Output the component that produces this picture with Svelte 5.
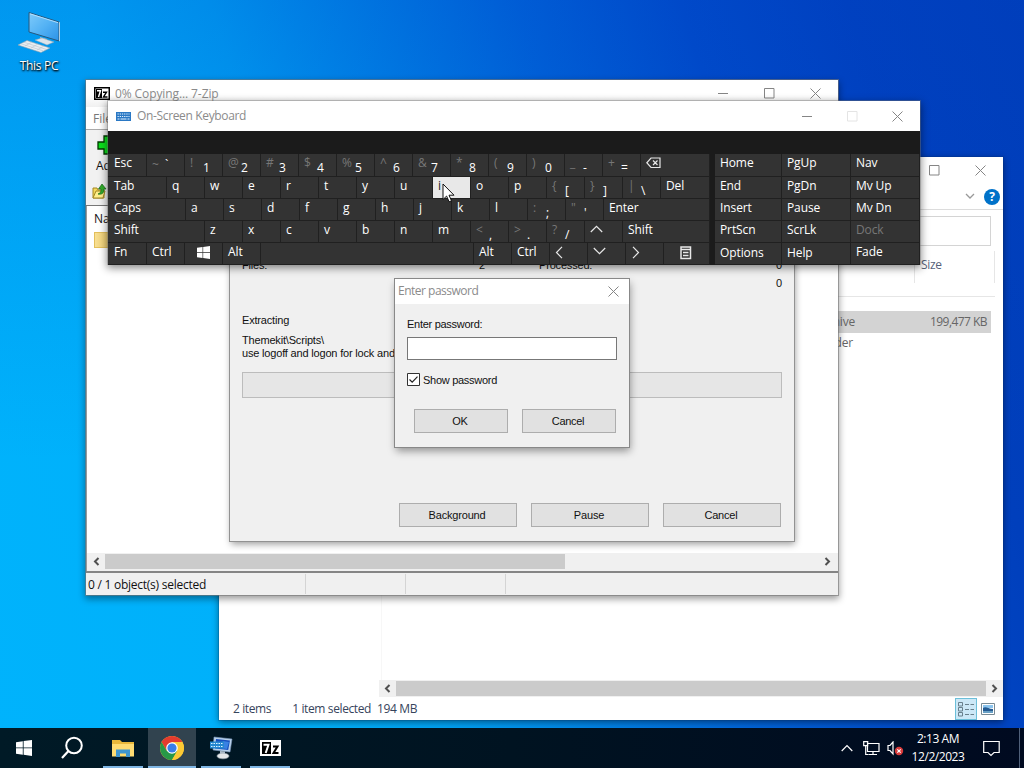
<script>
  const k = (m, w = 38, s = '') => ({ m, w, s });
  const letters = (t) => t.split('').map((c) => k(c));
  const rows = [
    [k('Esc', 38.5), k('`', 38, '~'), k('1', 38, '!'), k('2', 38, '@'), k('3', 38, '#'), k('4', 38, '$'), k('5', 38, '%'), k('6', 38, '^'), k('7', 38, '&'), k('8', 38, '*'), k('9', 38, '('), k('0', 38, ')'), k('-', 38, '_'), k('=', 38, '+'), k('backspace', 69)],
    [k('Tab', 58.5), ...letters('qwertyuiop'), k('[', 38, '{'), k(']', 38, '}'), k('\\', 38, '|'), k('Del', 49)],
    [k('Caps', 77.5), ...letters('asdfghjkl'), k(';', 38, ':'), k("'", 38, '"'), k('Enter', 106)],
    [k('Shift', 96.5), ...letters('zxcvbnm'), k(',', 38, '<'), k('.', 38, '>'), k('/', 38, '?'), k('up'), k('Shift', 87)],
    [k('Fn', 38.5), k('Ctrl'), k('win'), k('Alt'), k('', 213), k('Alt'), k('Ctrl'), k('left'), k('down'), k('right'), k('menu', 46)]
  ];
  const side = ['Home', 'PgUp', 'Nav', 'End', 'PgDn', 'Mv Up', 'Insert', 'Pause', 'Mv Dn', 'PrtScn', 'ScrLk', 'Dock', 'Options', 'Help', 'Fade'];
  const icons = ['backspace', 'up', 'left', 'down', 'right', 'menu', 'win'];
</script>

{#snippet min()}<svg width="11" height="11" viewBox="0 0 11 11"><path d="M0 5.500h10" /></svg>{/snippet}
{#snippet max()}<svg width="11" height="11" viewBox="0 0 11 11"><path d="M.5.5h9.500v9.500H.5z" /></svg>{/snippet}
{#snippet close()}<svg width="11" height="11" viewBox="0 0 11 11"><path d="m.5.5 10 10m0-10-10 10" /></svg>{/snippet}
{#snippet chev(d)}<svg class="chev" width="9" height="9" viewBox="0 0 9 9"><path d={d < 0 ? 'M6.500 1 3 4.500 6.500 8' : 'M2.500 1 6 4.500 2.500 8'} /></svg>{/snippet}
{#snippet flag(size)}
  <svg width={size} height={size} viewBox="0 0 16 16"><path fill="#fff" stroke="none" d="M0 2.200 6.800 1.200v6.300H0zM7.600 1.100 16 0v7.500H7.600zM0 8.300h6.800v6.400L0 13.700zM7.600 8.300H16V16l-8.400-1.200z" /></svg>
{/snippet}
{#snippet glyph(n)}
  {#if n === 'backspace'}
    <svg width="15" height="12" viewBox="0 0 15 12"><path d="M5 1h9v9.500H5L.8 5.750zM7 3.500l4.500 4.500m0-4.500L7 8" /></svg>
  {:else if n === 'menu'}
    <svg width="12" height="14" viewBox="0 0 12 14"><path d="M1 1h9.500v11.500H1zM1 3.500h9.500M3 6.500h5.500M3 9.500h5.500" stroke-width="1.500" /></svg>
  {:else if n === 'win'}
    {@render flag(13)}
  {:else}
    <svg width="13" height="13" viewBox="0 0 13 13"><path d={{ up: 'M.8 8 6.500 2.300 12.200 8', down: 'M.8 2 6.500 7.700 12.200 2', left: 'M8 .8 2.500 6.500 8 12.200', right: 'M3 .8l5.500 5.700L3 12.200' }[n]} /></svg>
  {/if}
{/snippet}

<div class="desktop">
  <div class="pc">
    <svg width="44" height="44" viewBox="0 0 44 44">
      <defs><linearGradient id="scr" x1="0" y1="0" x2="1" y2="1"><stop offset="0" stop-color="#7fcbfb" /><stop offset=".5" stop-color="#54b2f4" /><stop offset="1" stop-color="#2b92e8" /></linearGradient></defs>
      <path d="m12 1.500 30 9.500v19L12 21z" fill="url(#scr)" stroke="#27587e" stroke-width="1" />
      <path d="M13 2.800 41 11.700" stroke="#c6e8ff" stroke-width=".8" />
      <path d="m42 11 .8.3v19l-.8-.3z" fill="#d8e4ec" />
      <path d="m23 26 7 2v4l-7-2z" fill="#a9bac7" />
      <path d="m18 29 7-2 12 4-7 3z" fill="#dce4ea" stroke="#8fa5b5" stroke-width=".5" />
      <path d="m1 34 9-4.500 23 7.500-9 4.500z" fill="#e9eef2" stroke="#8da1b0" stroke-width=".6" />
      <path d="m4 32.800 22 7M7 31.300l22 7M8 35l7-4m-1 6 7-4m-1 6 7-4" stroke="#b7c3cc" stroke-width=".6" />
    </svg>
    <span>This PC</span>
  </div>

  <section class="window explorer">
    <div class="caption"><i>{@render max()}</i><i>{@render close()}</i></div>
    <div class="ribbon">
      <svg width="10" height="7" viewBox="0 0 10 7"><path d="m1 1 4 4 4-4" stroke="#999" stroke-width="1.300" fill="none" /></svg>
      <b>?</b>
    </div>
    <div class="search"><span></span></div>
    <div class="cols"><span>Size</span></div>
    <div class="files">
      <div class="file sel"><span>WinRAR ZIP archive</span><span>199,477 KB</span></div>
      <div class="file"><span>File folder</span><span></span></div>
    </div>
    <div class="hscroll"><i>{@render chev(-1)}</i><div class="thumb"></div><i>{@render chev(1)}</i></div>
    <footer>
      <span>2 items</span><span>1 item selected</span><span>194 MB</span>
      <div class="views">
        <i class="on"><svg width="18" height="16" viewBox="0 0 18 16"><path d="M1.500 1.500h4v3.500h-4zM1.500 6.500h4V10h-4zM1.500 11.500h4V15h-4zM8 3.500h4m1.500 0H17M8 8.500h4m1.500 0H17M8 13.500h4m1.500 0H17" stroke="#69808c" fill="none" /></svg></i>
        <i><svg width="14" height="12" viewBox="0 0 14 12"><path d="M.5.5h13v11H.5z" fill="#fff" stroke="#788a94" /><path d="M2 2h10v3H2z" fill="#8bc4ee" /><path d="M2 5c3-2 5 1 10 1v4H2z" fill="#245a92" /><path d="M2 8h10v2H2z" fill="#68a0c5" /></svg></i>
      </div>
    </footer>
  </section>

  <section class="window zip">
    <div class="titlebar">
      <svg width="16" height="13" viewBox="0 0 16 13"><path d="M.75.75h14.500v11.500H.75z" fill="#fff" stroke="#000" stroke-width="1.500" /><path d="M2 2h6v9H2z" fill="#000" /><path d="M3 3.700h3.500L4.500 10" stroke="#fff" stroke-width="1.400" fill="none" /><path d="M9 5.200h3.500l-3 4.800h4" stroke="#000" stroke-width="1.400" fill="none" /></svg>
      <span class="t">0% Copying... 7-Zip</span>
      <div class="caption"><i>{@render min()}</i><i>{@render max()}</i><i>{@render close()}</i></div>
    </div>
    <div class="menubar">File</div>
    <div class="tools">
      <svg width="22" height="20" viewBox="0 0 22 20"><path d="M7 1h7v6h6v7h-6v5H7v-5H1V7h6z" fill="#0ce01c" stroke="#003b00" stroke-width="1.300" /></svg>
      <span>Add</span>
    </div>
    <div class="path">
      <svg width="15" height="17" viewBox="0 0 15 17"><path d="M1 5h4l1 2h6v8H1z" fill="#f5d95b" stroke="#a28622" /><path d="m1 15 3-7h9l-2 7z" fill="#ffef8c" stroke="#a28622" /><path d="M6 11c3-1 3-3 3-5H6.500L10 1l4 5h-2c0 3-1 6-6 5z" fill="#32ad2c" stroke="#166716" stroke-width=".7" /></svg>
    </div>
    <div class="list"><span>Name</span><div class="folder"></div></div>
    <div class="hscroll"><i>{@render chev(-1)}</i><div class="thumb"></div><div class="rest"></div><i>{@render chev(1)}</i></div>
    <footer><span>0 / 1 object(s) selected</span><span></span><span></span></footer>
  </section>

  <section class="window dialog progress">
    <div class="stats"><span>Files:</span><span class="n">2</span><span>Processed:</span><span class="n">0</span></div>
    <div class="stats"><span></span><span></span><span>Compressed size:</span><span class="n">0</span></div>
    <p class="state">Extracting</p>
    <p>Themekit\Scripts\<br />use logoff and logon for lock and unlock</p>
    <div class="bar"></div>
    <div class="buttons"><button>Background</button><button>Pause</button><button>Cancel</button></div>
  </section>

  <section class="window dialog password">
    <div class="ptitle"><span class="t">Enter password</span>{@render close()}</div>
    <label for="pw">Enter password:</label>
    <input id="pw" />
    <div class="check"><svg width="13" height="13" viewBox="0 0 13 13"><path d="M.5.5h12v12H.5z" fill="#fff" stroke="#333" /><path d="m2.500 6.500 2.700 2.700 5.300-5.500" stroke="#222" stroke-width="1.200" fill="none" /></svg><span>Show password</span></div>
    <div class="buttons"><button>OK</button><button>Cancel</button></div>
  </section>

  <section class="window osk">
    <div class="titlebar">
      <svg width="15" height="9" viewBox="0 0 15 9"><path d="M0 0h15v9H0z" fill="#2a78c4" /><path d="M1.500 2h12M1.500 4.500h12" stroke="#e3f1ff" stroke-width="1.200" stroke-dasharray="1.300 .9" /><path d="M1.500 7h2m1 0h6m1 0h2" stroke="#e3f1ff" /></svg>
      <span class="t">On-Screen Keyboard</span>
      <div class="caption"><i>{@render min()}</i><i class="off">{@render max()}</i><i>{@render close()}</i></div>
    </div>
    <div class="board">
      <div class="main">
        {#each rows as row}
          <div class="row">
            {#each row as key}
              <div class="key" class:two={key.s} class:level={key.m === '`'} class:hot={key.m === 'i'} class:center={key.m === 'win' || key.m === 'menu'} class:nudge={key.m === 'left' || key.m === 'right'} style:width="{key.w}px">
                {#if key.s}<small>{key.s}</small>{/if}
                {#if icons.includes(key.m)}{@render glyph(key.m)}{:else}<span>{key.m}</span>{/if}
              </div>
            {/each}
          </div>
        {/each}
      </div>
      <div class="side">
        {#each side as s}<div class="key" class:dim={s === 'Dock'} class:low={s === 'Options' || s === 'Help'}>{s}</div>{/each}
      </div>
    </div>
  </section>

  <svg class="cursor" width="13" height="20" viewBox="0 0 13 20"><path d="M1 1v15.500l3.600-3.400 2.500 5.700 2.400-1-2.500-5.600h5z" fill="#fff" stroke="#111" stroke-width="1" /></svg>

  <nav class="taskbar">
    <i class="start">{@render flag(16)}</i>
    <i class="find"><svg width="24" height="24" viewBox="0 0 24 24"><circle cx="14" cy="9.500" r="7.800" stroke="#fff" stroke-width="2" fill="none" /><path d="m8.500 15-6.500 7" stroke="#fff" stroke-width="2.200" /></svg></i>
    <i class="app"><svg width="22" height="18" viewBox="0 0 22 18"><path d="M0 1h8l2 2h12v14H0z" fill="#e9b83b" /><path d="M0 5h22v12.500H0z" fill="#ffdc72" /><path d="M4 18v-7.500h14V18h-4v-3.500H8V18z" fill="#3f96d0" /></svg></i>
    <i class="app active"><svg width="24" height="24" viewBox="0 0 24 24"><circle cx="12" cy="12" r="12" fill="#fcc934" /><path d="M12 6H22.390A12 12 0 0 0 1.610 6L6.800 15z" fill="#e33b2e" /><path d="M1.610 6A12 12 0 0 0 12 24l5.200-9H6.800z" fill="#279847" /><path d="M22.390 6A12 12 0 0 1 12 24l5.200-9A6 6 0 0 0 12 6z" fill="#fcc934" /><circle cx="12" cy="12" r="5.800" fill="#fff" /><circle cx="12" cy="12" r="4.600" fill="#397ee8" /></svg></i>
    <i class="app"><svg width="24" height="24" viewBox="0 0 24 24"><path d="m5 1 18 2-2 13-17-2z" fill="#b8d0ea" stroke="#7896b8" stroke-width=".6" /><path d="m7 3 14 1.500-1.800 9.500L6 12.500z" fill="#164fbe" /><path d="m14 5 6 1-2 7-7-1z" fill="#3881e3" /><path d="M1 5.500h14v7H1z" fill="#2587cf" /><path d="M2 7.500h12M2 10.500h12" stroke="#dcf1ff" stroke-dasharray="1.500 1" /><path d="m11 15 5 .5v3h-5z" fill="#aebdca" /><ellipse cx="14" cy="20" rx="6" ry="2.800" fill="#e5e7e9" stroke="#9faab3" stroke-width=".6" /></svg></i>
    <i class="app"><svg width="21" height="16" viewBox="0 0 21 16"><path d="M0 0h21v16H0z" fill="#fff" /><path d="M2 2h9v12H2z" fill="#000" /><path d="M3.500 4.700H8.500L5.700 13" stroke="#fff" stroke-width="2" fill="none" /><path d="M13 6.500h4.500l-4 6.500H18.500" stroke="#000" stroke-width="2" fill="none" /></svg></i>
    <div class="tray">
      <svg width="12" height="8" viewBox="0 0 12 8"><path d="M.7 7 6 1.500 11.300 7" /></svg>
      <svg width="17" height="15" viewBox="0 0 17 15"><path d="M4.500 2.500h11.500v8H4.500zM10 10.500V13.500M6 13.500h8M.7.7h4v4h-4zM2.700 4.700v8.800h3" /></svg>
      <svg class="vol" width="17" height="15" viewBox="0 0 17 15"><path d="M1 4.500h2L6 1v12L3 9.500H1z" /><circle cx="12" cy="10" r="4.200" fill="#d93b3b" stroke="none" /><path d="m10.300 8.300 3.400 3.400m0-3.400-3.400 3.400" /></svg>
      <div class="clock"><span>2:13 AM</span><span>12/2/2023</span></div>
      <svg class="note" width="17" height="17" viewBox="0 0 17 17"><path d="M.7 1.500h15.500v11H11l-3 3-3-3H.7z" /></svg>
      <span class="peek"></span>
    </div>
  </nav>
</div>

<style>
  :global(body) { margin: 0; overflow: hidden; }
  .desktop {
    position: relative; width: 1024px; height: 768px; overflow: hidden;
    font: 12px/16px "Open Sans", "Noto Sans", sans-serif; color: #222;
    background: linear-gradient(180deg, rgba(0, 70, 205, .24), rgba(0, 70, 205, 0) 60%), linear-gradient(72deg, #00b3fc 0, #00b0fa 26%, #00a2f3 36%, #0088e8 46%, #0064d8 60%, #004ac8 73%, #003fbc 86%, #003cb6 100%);
  }
  .desktop *, .desktop { box-sizing: border-box; }
  svg { flex: none; display: block; fill: none; }
  i { font-style: normal; display: flex; align-items: center; justify-content: center; flex: none; }
  .pc { position: absolute; left: 0; top: 11px; width: 78px; display: flex; flex-direction: column; align-items: center; gap: 3px; color: #fff; text-shadow: 1px 1px 2px #000, 0 1px 2px #000; }
  .pc span { letter-spacing: -.3px; }
  .window { position: absolute; background: #fff; box-shadow: 0 0 0 1px #77777799, 0 3px 7px 1px #0006; display: flex; flex-direction: column; }
  .caption { display: flex; margin-left: auto; }
  .caption svg, .ptitle svg { stroke: #858585; stroke-width: 1; }
  .caption i { width: 46px; height: 28px; }
  .caption .off svg { stroke: #e4e4e4; }
  .t { color: #8b8b8b; letter-spacing: -.1px; }
  .chev { stroke: #505050; stroke-width: 2; }

  .explorer { left: 219px; top: 157px; width: 784px; height: 563px; box-shadow: 0 0 0 1px #00307033, 0 2px 7px #0007; color: #666; }
  .explorer .caption { height: 27px; }
  .explorer .caption i { height: 27px; }
  .ribbon { height: 26px; border-bottom: 1px solid #dcdcdc; display: flex; align-items: center; justify-content: flex-end; gap: 9px; padding-right: 3px; }
  .ribbon b { width: 16px; height: 16px; border-radius: 50%; background: #0072c9; color: #fff; text-align: center; font-size: 12px; line-height: 16px; }
  .search { height: 36px; padding: 6px 12px 0 0; display: flex; justify-content: flex-end; }
  .search span { width: 120px; height: 30px; border: 1px solid #d4d4d4; }
  .cols { height: 51px; margin-right: 8px; border-bottom: 1px solid #e6e6e6; padding-top: 5px; display: flex; justify-content: flex-end; }
  .cols span { width: 81px; height: 32px; border: solid #e6e6e6; border-width: 0 1px; padding: 6px 0 0 6px; color: #56627a; letter-spacing: -.3px; }
  .files { height: 383px; margin-left: 162px; padding: 14px 12px 0 0; flex: none; border-left: 1px solid #f7f7f7; }
  .file { height: 22px; display: flex; justify-content: space-between; align-items: center; padding: 0 4px 0 151px; letter-spacing: -.55px; }
  .file span:first-child { width: 322px; text-align: right; letter-spacing: -.2px; }
  .file:last-child { height: 20px; }
  .file:last-child span:first-child { width: 320px; }
  .sel { background: #d3d3d3; }
  .hscroll { display: flex; align-items: center; background: #f0f0f0; flex: none; }
  .explorer .hscroll { height: 17px; margin-left: 160px; }
  .hscroll i { width: 17px; height: 15px; }
  .thumb { background: #cbcbcb; height: 15px; }
  .explorer .thumb { flex: 1; }
  footer { display: flex; align-items: center; }
  .explorer footer { height: 23px; padding-left: 14px; color: #36445c; letter-spacing: -.38px; }
  .explorer footer span:nth-child(2) { margin: 0 6px 0 21px; }
  .views { margin-left: auto; display: flex; padding-right: 4px; }
  .views i { width: 22px; height: 22px; }
  .views .on { background: #cce8f7; border: 1px solid #6cbfd9; }

  .zip { left: 86px; top: 80px; width: 752px; height: 515px; }
  .titlebar { display: flex; align-items: center; background: #fff; flex: none; }
  .zip .titlebar { height: 27px; padding-left: 8px; gap: 5px; background: linear-gradient(#fff 55%, #f0f0f0); }
  .zip .titlebar .caption i { height: 27px; }
  .menubar { height: 23px; line-height: 23px; padding-left: 7px; border-bottom: 1px solid #aaa; color: #777; flex: none; }
  .tools { height: 50px; padding: 5px 0 0 11px; background: #f1f1f1; flex: none; }
  .tools span { display: block; margin: 3px 0 0 -1px; color: #111; }
  .path { height: 26px; padding: 3px 0 0 6px; background: #f1f1f1; border-bottom: 1px solid #777; flex: none; }
  .list { flex: 1; padding: 4px 0 0 7px; border-left: 1px solid #999; }
  .list span { display: block; line-height: 17px; color: #111; margin-bottom: 5px; }
  .folder { width: 16px; height: 16px; background: linear-gradient(90deg, #f8df92, #edcc6d); border: 1px solid #e3bf5b; }
  .zip .hscroll { height: 18px; padding: 0 2px 2px 1px; border-left: 1px solid #999; }
  .zip .thumb { width: 460px; }
  .rest { flex: 1; }
  .zip footer { height: 24px; background: #f0f0f0; border-top: 2px solid #858585; color: #111; flex: none; }
  .zip footer span { width: 100px; height: 20px; line-height: 21px; border-right: 1px solid #d4d4d4; }
  .zip footer span:first-child { width: 220px; padding-left: 2px; letter-spacing: -.25px; white-space: nowrap; }

  .dialog { background: #f0f0f0; color: #111; font: 11px/13px "Liberation Sans", Arial, sans-serif; letter-spacing: -.18px; }
  .progress { left: 230px; top: 220px; width: 564px; height: 321px; padding: 39px 12px 0 12px; box-shadow: 0 0 0 1px #929292, 1px 3px 7px #0006; }
  .stats { display: grid; grid-template-columns: 217px 26px 1fr 40px; height: 18px; flex: none; }
  .stats span { white-space: nowrap; }
  .stats span:nth-child(3) { padding-left: 54px; }
  .stats .n { text-align: right; }
  p { margin: 0; white-space: pre; }
  .state { margin: 19px 0 7px; }
  .bar { height: 26px; border: 1px solid #bcbcbc; background: #e6e6e6; margin-top: 12px; flex: none; }
  .buttons { display: flex; justify-content: flex-end; gap: 14px; }
  button { border: 1px solid #adadad; background: #e1e1e1; color: #111; padding: 0 2px 0 0; height: 24px; font: inherit; letter-spacing: inherit; border-radius: 0; }
  .progress .buttons { margin: 105px 1px 0 0; }
  .progress button { width: 118px; }
  .password { left: 395px; top: 279px; width: 234px; height: 168px; padding: 0 12px; box-shadow: 0 0 0 1px #888, 1px 4px 8px #0006; letter-spacing: -.28px; }
  .ptitle { height: 25px; background: #fff; margin: 0 -12px; padding: 0 10px 1px 3px; display: flex; align-items: center; justify-content: space-between; flex: none; }
  .ptitle .t { font: 12px/16px "Open Sans", sans-serif; letter-spacing: -.5px; }
  label { margin-top: 14px; }
  input { margin-top: 6px; width: 210px; height: 23px; border: 1px solid #777; background: #fff; padding: 0; flex: none; }
  .check { display: flex; align-items: center; gap: 3px; margin-top: 13px; }
  .check span { padding-top: 1px; margin-bottom: -1px; }
  .password .buttons { margin: 23px 1px 0 0; }
  .password button { width: 94px; }

  .osk { left: 108px; top: 101px; width: 812px; height: 163px; box-shadow: 0 0 0 1px #77777766, 0 3px 8px 1px #0007; }
  .osk .titlebar { height: 30px; padding-left: 8px; gap: 6px; }
  .osk .t { letter-spacing: -.35px; }
  .osk .caption i { width: 45px; }
  .board { flex: 1; background: #1b1b1b; padding-top: 23px; display: flex; gap: 5px; color: #fff; }
  .main { width: 602px; display: flex; flex-direction: column; }
  .row { display: flex; height: 22px; }
  .row:first-child { height: 23px; }
  .key { background: #333; border: solid #202020; border-width: 0 1px 1px 0; padding: 1px 0 0 6px; line-height: 16px; display: flex; align-items: flex-start; flex: none; letter-spacing: -.1px; }
  .row .key:nth-child(n+2) { padding-left: 5.500px; }
  .row .key > svg { stroke: #e8e8e8; stroke-width: 1.200; margin-top: 2px; }
  .row:last-child .key.center { padding: 1px 0 0; justify-content: center; }
  .row .key.nudge { padding-left: 4px; }
  .key small { width: 13px; font-size: 12px; line-height: 15px; color: #777; }
  .two span { margin-top: 5px; }
  .two.level span { margin-top: 2px; }
  .two.level small { padding-top: 2px; }
  .key.hot { background: #e8e8e8; color: #222; }
  .side { width: 205px; display: grid; grid-template-columns: 67px 69px 69px; grid-template-rows: 23px repeat(4, 22px); }
  .side .key { padding-left: 5px; }
  .side .low { padding-top: 2px; }
  .side .dim { color: #777; }
  .cursor { position: absolute; left: 442px; top: 183px; }

  .taskbar { position: absolute; left: 0; top: 728px; width: 1024px; height: 40px; background: linear-gradient(90deg, #001a26, #001321 50%, #000a20); display: flex; }
  .taskbar > i { width: 48px; height: 40px; }
  .taskbar .find { margin-right: 2px; }
  .taskbar .app { width: 40px; margin: 0 4px 0 5px; border-bottom: 2px solid #7fb6e4; padding-top: 1px; }
  .taskbar .active { width: 48px; margin: 0 0 0 1px; background: #31434f; }
  .tray { margin-left: auto; display: flex; align-items: center; color: #fff; }
  .tray svg { stroke: #fff; stroke-width: 1.200; }
  .tray svg + svg { margin-left: 10px; }
  .tray svg + .vol { margin-left: 7px; }
  .clock { display: flex; flex-direction: column; align-items: center; width: 54px; margin: 0 18px 0 7px; line-height: 18px; letter-spacing: -.45px; white-space: nowrap; }
  .peek { width: 5px; height: 40px; border-left: 1px solid #50607a; margin-left: 19px; }
</style>
